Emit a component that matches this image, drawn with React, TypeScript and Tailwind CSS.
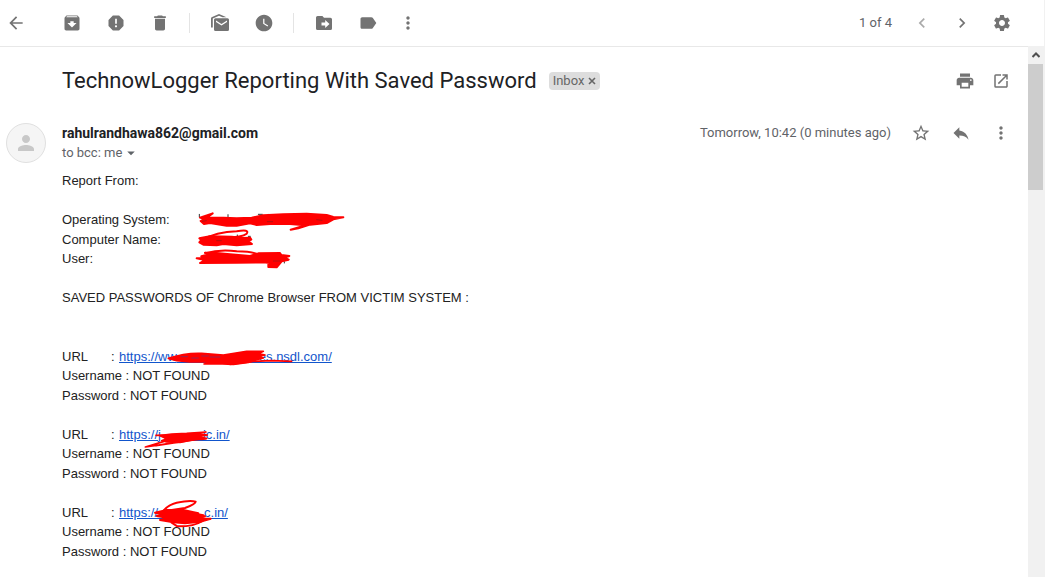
import type { ReactNode } from "react";
import {
  MdArchive,
  MdArrowBack,
  MdArrowDropDown,
  MdChevronLeft,
  MdChevronRight,
  MdDelete,
  MdLabel,
  MdMoreVert,
  MdOpenInNew,
  MdPerson,
  MdPrint,
  MdReply,
  MdReport,
  MdSettings,
  MdStarBorder,
  MdWatchLater,
} from "react-icons/md";

function IconButton({ label, children }: { label: string; children: ReactNode }) {
  return (
    <button
      type="button"
      aria-label={label}
      className="flex size-5 shrink-0 items-center justify-center text-[20px] text-[#737373]"
    >
      {children}
    </button>
  );
}

function MarkUnreadIcon() {
  return (
    <svg viewBox="0 0 20 20" className="size-5" fill="currentColor" aria-hidden="true">
      <path d="M1 14.500V5.500C1 4.700 1.400 4.200 2.100 3.900L9 1l7.500 3.200H12.500L9 2.800 2.800 5.500V14.500z" />
      <path
        fillRule="evenodd"
        d="M5.500 5.200h12A1.500 1.500 0 0 1 19 6.700v9.800a1.500 1.500 0 0 1-1.500 1.500h-12A1.500 1.500 0 0 1 4 16.500V6.700A1.500 1.500 0 0 1 5.500 5.200zM6 7.400v1.500l5.500 3.600 5.500-3.600V7.400l-5.500 3.500z"
      />
    </svg>
  );
}

function MoveToIcon() {
  return (
    <svg viewBox="0 0 20 20" className="size-5" fill="currentColor" aria-hidden="true">
      <path
        fillRule="evenodd"
        d="M3.600 3h4.800L10 4.700h6.400A1.600 1.600 0 0 1 18 6.300v9.100a1.600 1.600 0 0 1-1.600 1.600H3.600A1.600 1.600 0 0 1 2 15.400V4.600A1.600 1.600 0 0 1 3.600 3zM11.200 6.900v2.600H7.500v3h3.700v2.600L15.500 11z"
      />
    </svg>
  );
}

function Divider() {
  return <span className="h-5 w-px bg-[#e4e4e4]" />;
}

function Toolbar() {
  return (
    <header className="flex h-[46px] shrink-0 items-center justify-between pr-8 pl-[6px]">
      <div className="flex items-center">
        <IconButton label="Back"><MdArrowBack /></IconButton>
        <div className="ml-9 flex gap-6">
          <IconButton label="Archive"><MdArchive /></IconButton>
          <IconButton label="Report spam"><MdReport /></IconButton>
          <IconButton label="Delete"><MdDelete /></IconButton>
        </div>
        <div className="ml-[19px] flex items-center">
          <Divider />
          <div className="mr-[19px] ml-5 flex gap-6">
            <IconButton label="Mark as unread"><MarkUnreadIcon /></IconButton>
            <IconButton label="Snooze"><MdWatchLater /></IconButton>
          </div>
          <Divider />
          <div className="mr-5 ml-5 flex gap-6">
            <IconButton label="Move to"><MoveToIcon /></IconButton>
            <IconButton label="Labels"><MdLabel /></IconButton>
          </div>
          <IconButton label="More"><MdMoreVert /></IconButton>
        </div>
      </div>
      <div className="flex items-center gap-5">
        <span className="text-[13px] text-[#5f6368]">1 of 4</span>
        <span className="flex opacity-60">
          <IconButton label="Newer"><MdChevronLeft /></IconButton>
        </span>
        <IconButton label="Older"><MdChevronRight /></IconButton>
        <IconButton label="Settings"><MdSettings /></IconButton>
      </div>
    </header>
  );
}

function Subject() {
  return (
    <div className="flex items-center justify-between">
      <div className="flex items-center gap-3">
        <h1 className="text-[22px] leading-7 text-[#202124]">
          TechnowLogger Reporting With Saved Password
        </h1>
        <span className="flex h-[18px] items-center gap-1 rounded bg-[#ddd] px-1 text-[13px] text-[#666]">
          Inbox
          <button type="button" aria-label="Remove label Inbox" className="flex">
            <svg viewBox="0 0 8 8" className="size-2" stroke="currentColor" strokeWidth="1.600" aria-hidden="true">
              <path d="M1 1l6 6M7 1l-6 6" />
            </svg>
          </button>
        </span>
      </div>
      <div className="flex gap-4">
        <IconButton label="Print all"><MdPrint /></IconButton>
        <IconButton label="Open in new window"><MdOpenInNew className="text-[18px]" /></IconButton>
      </div>
    </div>
  );
}

function Sender() {
  return (
    <div className="flex">
      <span className="-ml-14 mr-4 flex size-10 items-center justify-center rounded-full border border-[#e0e0e0] bg-[#f5f5f5] text-2xl text-[#c8c8c8]">
        <MdPerson />
      </span>
      <div className="flex flex-1 flex-col">
        <div className="flex h-5 items-center justify-between">
          <span className="text-sm font-bold text-[#202124]">rahulrandhawa862@gmail.com</span>
          <div className="flex items-center gap-5">
            <span className="text-[13px] text-[#5f6368]">Tomorrow, 10:42 (0 minutes ago)</span>
            <IconButton label="Star"><MdStarBorder /></IconButton>
            <IconButton label="Reply"><MdReply /></IconButton>
            <IconButton label="More options"><MdMoreVert /></IconButton>
          </div>
        </div>
        <button
          type="button"
          className="flex h-5 items-center self-start text-[13px] text-[#5f6368]"
        >
          to bcc: me
          <MdArrowDropDown className="text-[18px]" />
        </button>
      </div>
    </div>
  );
}

function SystemScribble() {
  return (
    <svg
      viewBox="435 15 450 180"
      className="absolute top-0 left-[133px] h-[60px] w-[150px]"
      fill="#f00"
      stroke="#f00"
      strokeWidth="6"
      strokeLinejoin="round"
      strokeLinecap="round"
      aria-hidden="true"
    >
      <path d="M448 28v8M534 29v8M625 28h12M655 28v4M562 90v8M595 94h6M703 170v4" stroke="#333" strokeWidth="3" />
      <path d="M450 38L488 25 470 38 520 38 560 40 605 38 640 31 700 28 770 26 830 30 850 36 880 37 850 43 830 54 780 59 745 70 722 74 765 61 720 57 660 57 620 60 600 55 560 62 530 62 480 54 462 57 452 48 462 42z" />
      <path d="M448 100L480 94 545 95 580 99 600 98 604 104 594 108 606 117 560 121 520 117 500 121 460 119 448 112 455 106z" />
      <path d="M452 107Q500 80 560 79Q600 72 590 86Q575 98 520 97Q480 95 460 114" fill="none" />
      <path d="M440 160L465 158 454 154 478 148 465 143 500 144 540 148 600 153 625 145 690 144 694 150 718 153 704 158 716 164 695 169 680 187 655 186 655 178 678 176 640 172 560 173 450 174 465 165z" />
      <path d="M466 145Q510 132 560 139Q610 139 635 152" fill="none" />
      <path d="M457 49l12-2M652 50h16M800 44l16 2M500 107h14M670 168h20" fill="none" stroke="#b51010" strokeWidth="3" />
    </svg>
  );
}

function WideScribble() {
  return (
    <svg
      viewBox="345 24 390 54"
      className="absolute top-px left-[103px] h-[18px] w-[130px]"
      fill="#f00"
      stroke="#f00"
      strokeWidth="5"
      strokeLinejoin="round"
      strokeLinecap="round"
      aria-hidden="true"
    >
      <path d="M355 55Q405 38 455 40L520 45 590 34 640 34 625 41 645 45 624 50 640 54 618 60 595 67 550 73 500 71 462 72 490 66 420 66 380 62z" />
      <path d="M540 73L610 64 665 62 725 64M600 50l28-2" fill="none" />
      <path d="M393 50h20M425 54h20M455 48h20M480 51h30" fill="none" stroke="#9c2450" strokeWidth="3" />
    </svg>
  );
}

function ShortScribble() {
  return (
    <svg
      viewBox="279 6 216 66"
      className="absolute top-[3px] left-[81px] h-[22px] w-[72px]"
      fill="#f00"
      stroke="#f00"
      strokeWidth="5"
      strokeLinejoin="round"
      strokeLinecap="round"
      aria-hidden="true"
    >
      <path d="M330 29L365 24 410 22 468 18 440 23 472 27 450 31 468 38 420 43 390 49 350 48 335 44 350 38z" />
      <path d="M318 28l42-1M286 63L335 56 390 47M286 63L340 47M318 59L430 42M455 40l15-3" fill="none" />
    </svg>
  );
}

function LoopScribble() {
  return (
    <svg
      viewBox="306 9 180 90"
      className="absolute -top-1 left-[90px] h-[30px] w-[60px]"
      fill="#f00"
      stroke="#f00"
      strokeWidth="6"
      strokeLinejoin="round"
      strokeLinecap="round"
      aria-hidden="true"
    >
      <path d="M315 50L350 42 400 42 445 52 425 57 465 61 440 67 482 68 450 77 405 82 370 79 330 72 355 66 320 60 345 56z" />
      <path d="M338 47Q355 25 380 20Q420 12 437 17Q438 24 405 36L360 43M365 80L382 91Q430 92 458 75M440 54l20 4" fill="none" />
    </svg>
  );
}

type EntryData = {
  start: string;
  end: string;
  gap: string;
  scribble: ReactNode;
};

const entries: EntryData[] = [
  { start: "https://ww", end: "es.nsdl.com/", gap: "w-[82px]", scribble: <WideScribble /> },
  { start: "https://j", end: "ic.in/", gap: "w-[42px]", scribble: <ShortScribble /> },
  { start: "https://", end: "c.in/", gap: "w-[46px]", scribble: <LoopScribble /> },
];

function Entry({ start, end, gap, scribble }: EntryData) {
  return (
    <div className="mb-[1lh]">
      <div className="relative flex">
        <span className="w-[49px]">URL</span>
        <span className="w-2">:</span>
        <a href="#entry" className="flex text-[#1155cc] underline">
          {start}
          <span className={`h-[16px] border-b border-[#1155cc] ${gap}`} />
          {end}
        </a>
        {scribble}
      </div>
      <p>Username : NOT FOUND</p>
      <p>Password : NOT FOUND</p>
    </div>
  );
}

function MessageBody() {
  return (
    <div className="mt-2 font-['Liberation_Sans',Arial,sans-serif] text-[13px] leading-normal text-[#222]">
      <p>Report From:</p>
      <div className="relative mt-[1lh]">
        <p>Operating System:</p>
        <p>Computer Name:</p>
        <p>User:</p>
        <SystemScribble />
      </div>
      <p className="mt-[1lh] mb-[2lh]">SAVED PASSWORDS OF Chrome Browser FROM VICTIM SYSTEM :</p>
      {entries.map((entry) => (
        <Entry key={entry.end} {...entry} />
      ))}
    </div>
  );
}

function Scrollbar() {
  return (
    <div className="flex w-4 shrink-0 flex-col bg-[#f1f1f1] pr-px" aria-hidden="true">
      <div className="flex h-[18px] items-center justify-center">
        <svg viewBox="0 0 8 6" className="h-[6px] w-2" fill="none" stroke="#505050" strokeWidth="2">
          <path d="M0.500 5L4 1.500 7.500 5" />
        </svg>
      </div>
      <div className="h-[126px] bg-[#cdcdcd]" />
    </div>
  );
}

export default function App() {
  return (
    <div className="h-screen overflow-hidden bg-white pr-[2px] font-[Roboto,sans-serif]">
      <div className="flex h-full flex-col border-r border-[#f1f1f1]">
        <Toolbar />
        <div className="flex min-h-0 flex-1">
          <main className="min-w-0 flex-1 overflow-hidden border-t border-[#e8e8e8] pt-5 pr-[17px] pl-[62px]">
            <Subject />
            <div className="mt-7">
              <Sender />
            </div>
            <MessageBody />
          </main>
          <Scrollbar />
        </div>
      </div>
    </div>
  );
}
